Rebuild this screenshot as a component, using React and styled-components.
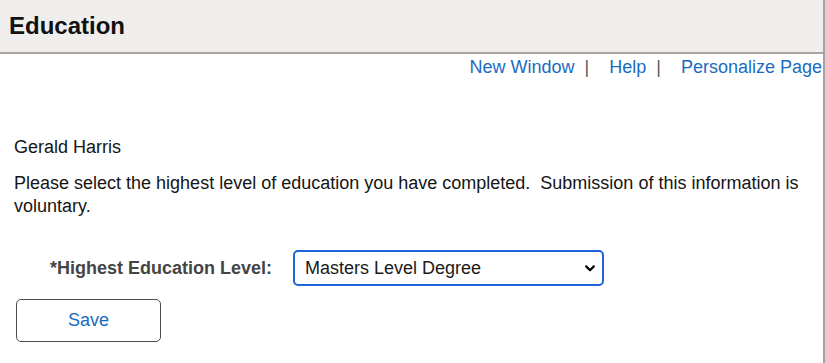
import React from "react";
import styled, { createGlobalStyle } from "styled-components";

const GlobalStyle = createGlobalStyle`
  html, body {
    margin: 0;
    padding: 0;
    background: #ffffff;
  }
  body {
    font-family: "Liberation Sans", Arial, Helvetica, sans-serif;
    color: #151515;
  }
`;

const PageFrame = styled.div`
  width: 825px;
  height: 363px;
  box-sizing: border-box;
  border-right: 2px solid #a3a3a3;
  overflow: hidden;
  background: #ffffff;
`;

const PageHeader = styled.div`
  height: 52px;
  display: flex;
  align-items: center;
  padding-left: 9px;
  background: #efeeed;
  border-bottom: 2px solid #a9a6a2;
`;

const PageTitle = styled.h1`
  margin: 0;
  font-size: 24px;
  font-weight: bold;
  color: #111111;
`;

const LinkBar = styled.div`
  display: flex;
  justify-content: flex-end;
  align-items: center;
  margin: 2px 1px 0 0;
  font-size: 18px;
  line-height: 22px;
  white-space: nowrap;
`;

const TopLink = styled.a`
  color: #1b6bbf;
  text-decoration: none;
  cursor: pointer;
`;

const Separator = styled.span`
  color: #5a5a5a;
  margin: 0 20px 0 10px;
`;

const Content = styled.div`
  padding: 0 14px;
  font-size: 18px;
`;

const UserName = styled.div`
  margin-top: 58px;
  line-height: 22px;
`;

const Intro = styled.p`
  margin: 14px 0 0;
  line-height: 23px;
`;

const FormRow = styled.div`
  display: flex;
  align-items: center;
  gap: 21px;
  margin-top: 32px;
`;

const FieldLabel = styled.label`
  width: 258px;
  text-align: right;
  font-weight: bold;
  color: #454545;
`;

const SelectBox = styled.select`
  width: 311px;
  height: 36px;
  box-sizing: border-box;
  padding: 0 24px 0 10px;
  border: 2px solid #1f64d8;
  border-radius: 5px;
  background-color: #ffffff;
  font-family: inherit;
  font-size: 18px;
  color: #1a1a1a;
  appearance: none;
  outline: none;
  background-image: url("data:image/svg+xml;utf8,<svg xmlns='http://www.w3.org/2000/svg' width='10' height='7' viewBox='0 0 10 7'><path d='M1.2 1.4 L5 5.2 L8.8 1.4' fill='none' stroke='black' stroke-width='2.2' stroke-linecap='round' stroke-linejoin='round'/></svg>");
  background-repeat: no-repeat;
  background-position: right 7px center;
  background-size: 10px 7px;
`;

const SaveButton = styled.button`
  display: block;
  width: 145px;
  height: 43px;
  margin: 13px 0 0 2px;
  border: 1px solid #4d4d4d;
  border-radius: 5px;
  background: #ffffff;
  color: #1b6bbf;
  font-family: inherit;
  font-size: 18px;
  cursor: pointer;
`;

export default function App() {
  return (
    <>
      <GlobalStyle />
      <PageFrame>
        <PageHeader>
          <PageTitle>Education</PageTitle>
        </PageHeader>
        <LinkBar>
          <TopLink>New Window</TopLink>
          <Separator>|</Separator>
          <TopLink>Help</TopLink>
          <Separator>|</Separator>
          <TopLink>Personalize Page</TopLink>
        </LinkBar>
        <Content>
          <UserName>Gerald Harris</UserName>
          <Intro>
            Please select the highest level of education you have completed.&nbsp; Submission of this
            information is voluntary.
          </Intro>
          <FormRow>
            <FieldLabel htmlFor="edu-level">*Highest Education Level:</FieldLabel>
            <SelectBox id="edu-level" defaultValue="masters">
              <option value="hs">High School Diploma</option>
              <option value="bachelors">Bachelors Level Degree</option>
              <option value="masters">Masters Level Degree</option>
              <option value="doctorate">Doctorate</option>
            </SelectBox>
          </FormRow>
          <SaveButton type="button">Save</SaveButton>
        </Content>
      </PageFrame>
    </>
  );
}
